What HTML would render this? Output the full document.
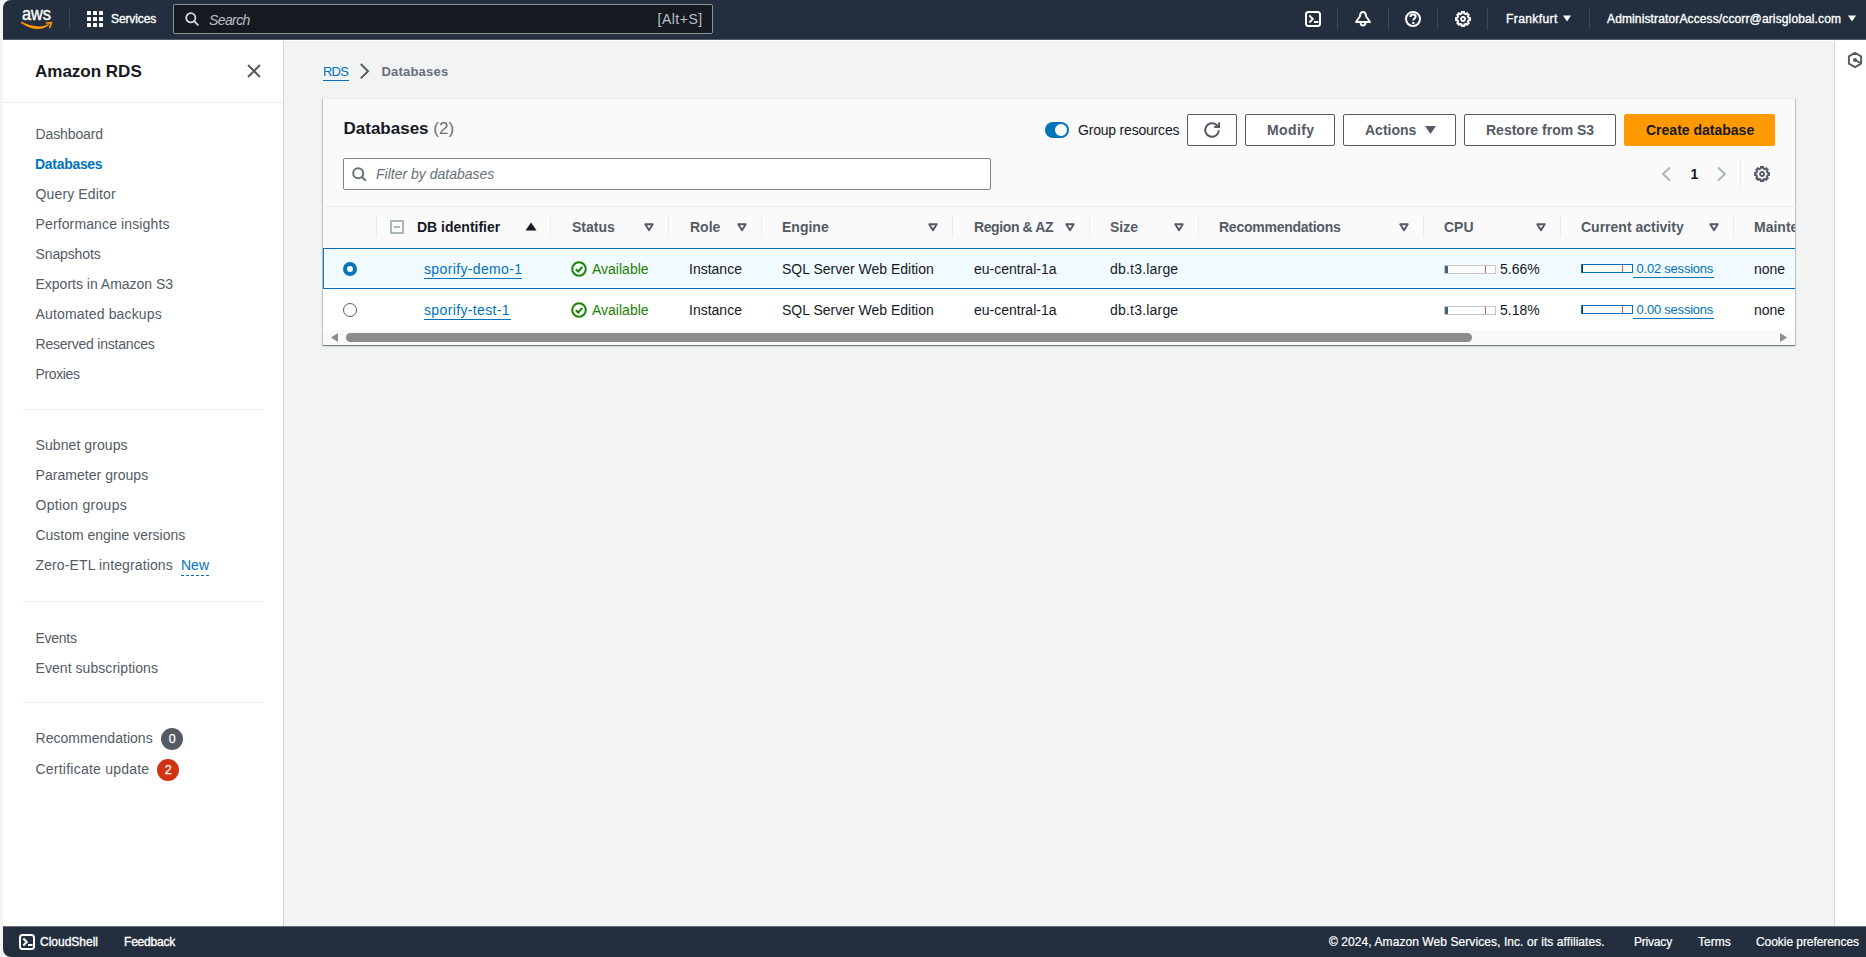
<!DOCTYPE html>
<html><head><meta charset="utf-8">
<style>
*{box-sizing:border-box;margin:0;padding:0}
html,body{width:1866px;height:957px;overflow:hidden;background:#f4f4f4;font-family:"Liberation Sans",sans-serif;}
.abs{position:absolute}
.t{position:absolute;white-space:nowrap}
#frame{position:absolute;left:3px;top:0;width:1863px;height:957px;border-radius:8px 0 0 8px;overflow:hidden;background:#fff}
#box{position:absolute;left:323px;top:98px;width:1472px;height:247px;background:#fafafa;box-shadow:0 1px 1px 0 rgba(0,28,36,.3),1px 1px 1px 0 rgba(0,28,36,.17),-1px 1px 1px 0 rgba(0,28,36,.17);border-top:1px solid #eaeded}
.btn{position:absolute;top:114px;height:32px;border:1px solid #545b64;border-radius:2px;background:#fff}
.badge{position:absolute;width:22px;height:22px;border-radius:11px}
</style></head><body>
<div id="frame"></div>

<div class="abs" style="left:3px;top:0;width:1863px;height:39px;background:#232f3e;border-top-left-radius:8px"></div>
<div class="abs" style="left:3px;top:39px;width:1863px;height:1px;background:#555d69"></div>
<div class="abs" style="left:3px;top:926px;width:1863px;height:31px;background:#232f3e;border-bottom-left-radius:8px"></div>
<div class="abs" style="left:3px;top:926px;width:1863px;height:1px;background:#6a717c"></div>
<div class="abs" style="left:283px;top:41px;width:1px;height:885px;background:#d0d5d8"></div>
<div class="abs" style="left:284px;top:41px;width:1550px;height:885px;background:#f2f3f3"></div>
<div class="abs" style="left:1834px;top:41px;width:1px;height:885px;background:#d5dbdb"></div>
<svg class="abs" style="left:20px;top:8px" width="34" height="23" viewBox="0 0 34 23">
  <text x="2" y="11.7" font-family="Liberation Sans" font-size="19" fill="#fff" stroke="#fff" stroke-width="0.4" textLength="29" lengthAdjust="spacingAndGlyphs">aws</text>
  <path d="M1.0 13.6 L1.0 14.9 Q18.3 26.1 29.0 17.0 L28.4 15.9 Q18.5 22.0 1.0 13.6 Z" fill="#ff9900"/>
  <path d="M26.5 15.0 L31.3 14.7 L29.8 19.5" stroke="#ff9900" stroke-width="1.7" fill="none" stroke-linecap="round" stroke-linejoin="miter"/>
</svg>
<div class="abs" style="left:69px;top:8px;width:1px;height:22px;background:#414750"></div>
<svg class="abs" style="left:87px;top:11px" width="16" height="16" viewBox="0 0 16 16" fill="#fff"><rect x="0" y="0" width="4" height="4" rx="0.6"/><rect x="6" y="0" width="4" height="4" rx="0.6"/><rect x="12" y="0" width="4" height="4" rx="0.6"/><rect x="0" y="6" width="4" height="4" rx="0.6"/><rect x="6" y="6" width="4" height="4" rx="0.6"/><rect x="12" y="6" width="4" height="4" rx="0.6"/><rect x="0" y="12" width="4" height="4" rx="0.6"/><rect x="6" y="12" width="4" height="4" rx="0.6"/><rect x="12" y="12" width="4" height="4" rx="0.6"/></svg>
<div class="t" style="left:111px;top:12.03px;font-size:12px;line-height:14px;color:#fff;font-weight:normal;letter-spacing:-0.1px;-webkit-text-stroke:0.35px #fff;">Services</div>
<div class="abs" style="left:173px;top:4px;width:540px;height:30px;background:#16191f;border:1px solid #879596;border-radius:2px"></div>
<svg class="abs" style="left:185px;top:12px" width="14" height="14" viewBox="0 0 14 14"><circle cx="5.8" cy="5.8" r="4.6" stroke="#d5dbdb" stroke-width="1.8" fill="none"/><path d="M9.2 9.2 L12.8 12.8" stroke="#d5dbdb" stroke-width="1.8" stroke-linecap="round"/></svg>
<div class="t" style="left:209px;top:11.67px;font-size:14px;line-height:16px;color:#b7c0c7;font-weight:normal;font-style:italic;letter-spacing:-0.6px;">Search</div>
<div class="t" style="left:657.5px;top:11.37px;font-size:14px;line-height:16px;color:#b7c0c7;font-weight:normal;letter-spacing:0.5px;">[Alt+S]</div>
<svg class="abs" style="left:1305px;top:11px" width="16" height="16" viewBox="0 0 16 16"><rect x="1" y="1" width="14" height="14" rx="2.5" stroke="#fff" stroke-width="2" fill="none"/><path d="M4.3 4.5 L7.8 8 L4.3 11.5" stroke="#fff" stroke-width="2" fill="none"/><rect x="9" y="10" width="4.5" height="2" fill="#fff"/></svg>
<div class="abs" style="left:1337px;top:8px;width:1px;height:22px;background:#414750"></div>
<svg class="abs" style="left:1355px;top:11px" width="16" height="17" viewBox="0 0 16 17"><path d="M8 1.1 C6.1 1.1 5.2 2.6 5.0 5.2 L1 11 L15 11 L11 5.2 C10.8 2.6 9.9 1.1 8 1.1 Z" stroke="#fff" stroke-width="2" fill="none" stroke-linejoin="round"/><path d="M5.6 12 A2.4 2.4 0 0 0 10.4 12" stroke="#fff" stroke-width="2" fill="none"/></svg>
<div class="abs" style="left:1388px;top:8px;width:1px;height:22px;background:#414750"></div>
<svg class="abs" style="left:1405px;top:11px" width="16" height="16" viewBox="0 0 16 16"><circle cx="8" cy="8" r="7" stroke="#fff" stroke-width="2" fill="none"/><path d="M5.4 6 C5.4 4.3 6.5 3.5 8 3.5 C9.5 3.5 10.6 4.4 10.6 5.7 C10.6 7.3 8.4 7.5 8.3 9 L8.3 9.6" stroke="#fff" stroke-width="2" fill="none"/><rect x="7.2" y="11" width="2.2" height="2" fill="#fff"/></svg>
<div class="abs" style="left:1437px;top:8px;width:1px;height:22px;background:#414750"></div>
<svg class="abs" style="left:1455px;top:11px" width="16" height="16" viewBox="0 0 16 16"><path d="M6.62 2.47 L6.90 1.09 L9.10 1.09 L9.38 2.47 L10.94 3.11 L12.11 2.34 L13.66 3.89 L12.89 5.06 L13.53 6.62 L14.91 6.90 L14.91 9.10 L13.53 9.38 L12.89 10.94 L13.66 12.11 L12.11 13.66 L10.94 12.89 L9.38 13.53 L9.10 14.91 L6.90 14.91 L6.62 13.53 L5.06 12.89 L3.89 13.66 L2.34 12.11 L3.11 10.94 L2.47 9.38 L1.09 9.10 L1.09 6.90 L2.47 6.62 L3.11 5.06 L2.34 3.89 L3.89 2.34 L5.06 3.11 Z" fill="none" stroke="#fff" stroke-width="2" stroke-linejoin="miter"/><circle cx="8" cy="8" r="2" stroke="#fff" stroke-width="1.8" fill="none"/></svg>
<div class="abs" style="left:1487px;top:8px;width:1px;height:22px;background:#414750"></div>
<div class="t" style="left:1506px;top:12.03px;font-size:12px;line-height:14px;color:#fff;font-weight:normal;letter-spacing:0.4px;-webkit-text-stroke:0.35px #fff;">Frankfurt</div>
<svg class="abs" style="left:1563px;top:15px" width="8" height="7" viewBox="0 0 8 7"><path d="M0 0.5 L8 0.5 L4 6.5 Z" fill="#fff"/></svg>
<div class="abs" style="left:1589px;top:8px;width:1px;height:22px;background:#414750"></div>
<div class="t" style="left:1607px;top:12.03px;font-size:12px;line-height:14px;color:#fff;font-weight:normal;letter-spacing:0.13px;-webkit-text-stroke:0.35px #fff;">AdministratorAccess/ccorr@arisglobal.com</div>
<svg class="abs" style="left:1848px;top:15px" width="8" height="7" viewBox="0 0 8 7"><path d="M0 0.5 L8 0.5 L4 6.5 Z" fill="#fff"/></svg>
<div class="t" style="left:35px;top:62.38px;font-size:17px;line-height:20px;color:#16191f;font-weight:bold;">Amazon RDS</div>
<svg class="abs" style="left:247px;top:64px" width="14" height="14" viewBox="0 0 14 14"><path d="M1 1 L13 13 M13 1 L1 13" stroke="#545b64" stroke-width="2"/></svg>
<div class="abs" style="left:3px;top:102px;width:280px;height:1px;background:#eaeded"></div>
<div class="t" style="left:35.5px;top:126.37px;font-size:14px;line-height:16px;color:#545b64;font-weight:normal;letter-spacing:-0.107px;">Dashboard</div>
<div class="t" style="left:35px;top:156.37px;font-size:14px;line-height:16px;color:#0073bb;font-weight:bold;letter-spacing:-0.3px;">Databases</div>
<div class="t" style="left:35.5px;top:186.37px;font-size:14px;line-height:16px;color:#545b64;font-weight:normal;letter-spacing:0.14px;">Query Editor</div>
<div class="t" style="left:35.5px;top:216.37px;font-size:14px;line-height:16px;color:#545b64;font-weight:normal;letter-spacing:0.129px;">Performance insights</div>
<div class="t" style="left:35.5px;top:246.37px;font-size:14px;line-height:16px;color:#545b64;font-weight:normal;letter-spacing:-0.118px;">Snapshots</div>
<div class="t" style="left:35.5px;top:276.37px;font-size:14px;line-height:16px;color:#545b64;font-weight:normal;letter-spacing:-0.006px;">Exports in Amazon S3</div>
<div class="t" style="left:35.5px;top:306.37px;font-size:14px;line-height:16px;color:#545b64;font-weight:normal;letter-spacing:0.156px;">Automated backups</div>
<div class="t" style="left:35.5px;top:336.37px;font-size:14px;line-height:16px;color:#545b64;font-weight:normal;letter-spacing:-0.218px;">Reserved instances</div>
<div class="t" style="left:35.5px;top:366.37px;font-size:14px;line-height:16px;color:#545b64;font-weight:normal;letter-spacing:-0.362px;">Proxies</div>
<div class="t" style="left:35.5px;top:437.37px;font-size:14px;line-height:16px;color:#545b64;font-weight:normal;letter-spacing:0.081px;">Subnet groups</div>
<div class="t" style="left:35.5px;top:467.37px;font-size:14px;line-height:16px;color:#545b64;font-weight:normal;letter-spacing:0.04px;">Parameter groups</div>
<div class="t" style="left:35.5px;top:497.37px;font-size:14px;line-height:16px;color:#545b64;font-weight:normal;letter-spacing:0.274px;">Option groups</div>
<div class="t" style="left:35.5px;top:527.37px;font-size:14px;line-height:16px;color:#545b64;font-weight:normal;letter-spacing:-0.025px;">Custom engine versions</div>
<div class="t" style="left:35.5px;top:557.37px;font-size:14px;line-height:16px;color:#545b64;font-weight:normal;letter-spacing:0.119px;">Zero-ETL integrations</div>
<div class="t" style="left:35.5px;top:630.37px;font-size:14px;line-height:16px;color:#545b64;font-weight:normal;letter-spacing:-0.279px;">Events</div>
<div class="t" style="left:35.5px;top:660.37px;font-size:14px;line-height:16px;color:#545b64;font-weight:normal;letter-spacing:0.058px;">Event subscriptions</div>
<div class="t" style="left:35.5px;top:730.37px;font-size:14px;line-height:16px;color:#545b64;font-weight:normal;letter-spacing:0.031px;">Recommendations</div>
<div class="t" style="left:35.5px;top:761.37px;font-size:14px;line-height:16px;color:#545b64;font-weight:normal;letter-spacing:0.23px;">Certificate update</div>
<div class="abs" style="left:23px;top:409px;width:240px;height:1px;background:#eaeded"></div>
<div class="abs" style="left:23px;top:601px;width:240px;height:1px;background:#eaeded"></div>
<div class="abs" style="left:23px;top:702px;width:240px;height:1px;background:#eaeded"></div>
<div class="t" style="left:181px;top:557.37px;font-size:14px;line-height:16px;color:#0073bb;font-weight:normal;">New</div>
<div class="abs" style="left:181px;top:575px;width:28px;height:0;border-top:1px dashed #0073bb"></div>
<div class="badge" style="left:161px;top:728px;background:#545b64"></div>
<div class="t" style="left:168.8px;top:732.37px;font-size:12.5px;line-height:14px;color:#fff;font-weight:normal;-webkit-text-stroke:0.25px #fff;">0</div>
<div class="badge" style="left:157px;top:759px;background:#d13212"></div>
<div class="t" style="left:164.8px;top:763.37px;font-size:12.5px;line-height:14px;color:#fff;font-weight:normal;-webkit-text-stroke:0.25px #fff;">2</div>
<svg class="abs" style="left:1846px;top:51px" width="18" height="18" viewBox="0 0 18 18"><path d="M9 1.9 L15.1 5.4 L15.1 12.6 L9 16.1 L2.9 12.6 L2.9 5.4 Z" stroke="#545b64" stroke-width="1.9" fill="none" stroke-linejoin="round"/><circle cx="9" cy="8.9" r="2" fill="#545b64"/><path d="M9 8.9 L14.8 12.2" stroke="#545b64" stroke-width="1.8"/></svg>
<svg class="abs" style="left:19px;top:934px" width="16" height="16" viewBox="0 0 16 16"><rect x="1" y="1" width="14" height="14" rx="2.5" stroke="#fff" stroke-width="2" fill="none"/><path d="M4.3 4.5 L7.8 8 L4.3 11.5" stroke="#fff" stroke-width="2" fill="none"/><rect x="9" y="10" width="4.5" height="2" fill="#fff"/></svg>
<div class="t" style="left:40px;top:935.03px;font-size:12px;line-height:14px;color:#fff;font-weight:normal;letter-spacing:0px;-webkit-text-stroke:0.35px #fff;">CloudShell</div>
<div class="t" style="left:124px;top:935.03px;font-size:12px;line-height:14px;color:#fff;font-weight:normal;letter-spacing:-0.2px;-webkit-text-stroke:0.35px #fff;">Feedback</div>
<div class="t" style="left:1329px;top:935.03px;font-size:12px;line-height:14px;color:#fff;font-weight:normal;letter-spacing:0.075px;-webkit-text-stroke:0.2px #fff;">© 2024, Amazon Web Services, Inc. or its affiliates.</div>
<div class="t" style="left:1634px;top:935.03px;font-size:12px;line-height:14px;color:#fff;font-weight:normal;letter-spacing:-0.2px;-webkit-text-stroke:0.2px #fff;">Privacy</div>
<div class="t" style="left:1698px;top:935.03px;font-size:12px;line-height:14px;color:#fff;font-weight:normal;-webkit-text-stroke:0.2px #fff;">Terms</div>
<div class="t" style="left:1756px;top:935.03px;font-size:12px;line-height:14px;color:#fff;font-weight:normal;letter-spacing:-0.06px;-webkit-text-stroke:0.2px #fff;">Cookie preferences</div>
<div class="t" style="left:323px;top:63.80px;font-size:13px;line-height:15px;color:#0073bb;font-weight:normal;letter-spacing:-0.8px;">RDS</div>
<div class="abs" style="left:323px;top:80px;width:26px;height:1px;background:#0073bb"></div>
<svg class="abs" style="left:358px;top:63px" width="12" height="17" viewBox="0 0 12 17"><path d="M2.8 1 L10 8.2 L2.8 15.4" stroke="#545b64" stroke-width="2" fill="none"/></svg>
<div class="t" style="left:381.5px;top:63.80px;font-size:13px;line-height:15px;color:#687078;font-weight:bold;letter-spacing:0.2px;">Databases</div>
<div id="box"></div>
<div class="t" style="left:343.5px;top:119.38px;font-size:17px;line-height:20px;color:#16191f;font-weight:bold;">Databases <span style="font-weight:normal;color:#687078">(2)</span></div>
<div class="abs" style="left:1045px;top:122px;width:24px;height:16px;border-radius:8px;background:#0073bb"></div>
<div class="abs" style="left:1055px;top:124px;width:12px;height:12px;border-radius:6px;background:#fff"></div>
<div class="t" style="left:1078px;top:122.37px;font-size:14px;line-height:16px;color:#16191f;font-weight:normal;letter-spacing:-0.2px;">Group resources</div>
<div class="btn" style="left:1187px;width:50px;"></div>
<svg class="abs" style="left:1203px;top:121px" width="18" height="18" viewBox="0 0 18 18"><path d="M15.8 9.3 A6.8 6.8 0 1 1 13.6 4.0 L15.6 5.8" stroke="#545b64" stroke-width="2" fill="none"/><path d="M16.1 1.2 L16.1 6.1 L11.2 6.1" stroke="#545b64" stroke-width="2" fill="none" stroke-linejoin="miter"/></svg>
<div class="btn" style="left:1245px;width:90px;"></div>
<div class="t" style="left:1267px;top:122.37px;font-size:14px;line-height:16px;color:#545b64;font-weight:bold;letter-spacing:0.4px;">Modify</div>
<div class="btn" style="left:1343px;width:113px;"></div>
<div class="t" style="left:1365px;top:122.37px;font-size:14px;line-height:16px;color:#545b64;font-weight:bold;letter-spacing:0px;">Actions</div>
<svg class="abs" style="left:1425px;top:125px" width="11" height="10" viewBox="0 0 11 10"><path d="M0 1 L11 1 L5.5 9 Z" fill="#545b64"/></svg>
<div class="btn" style="left:1464px;width:152px;"></div>
<div class="t" style="left:1486px;top:122.37px;font-size:14px;line-height:16px;color:#545b64;font-weight:bold;letter-spacing:0px;">Restore from S3</div>
<div class="btn" style="left:1624px;width:151px;background:#ff9900;border-color:#ff9900;"></div>
<div class="t" style="left:1646px;top:122.37px;font-size:14px;line-height:16px;color:#16191f;font-weight:bold;letter-spacing:0px;">Create database</div>
<div class="abs" style="left:343px;top:158px;width:648px;height:32px;background:#fff;border:1px solid #7d8790;border-radius:2px"></div>
<svg class="abs" style="left:352px;top:167px" width="15" height="15" viewBox="0 0 15 15"><circle cx="6.2" cy="6.2" r="5" stroke="#687078" stroke-width="2" fill="none"/><path d="M9.8 9.8 L13.8 13.8" stroke="#687078" stroke-width="2"/></svg>
<div class="t" style="left:376px;top:165.87px;font-size:14px;line-height:16px;color:#687078;font-weight:normal;font-style:italic;">Filter by databases</div>
<svg class="abs" style="left:1660px;top:166px" width="12" height="16" viewBox="0 0 12 16"><path d="M10 1.5 L3 8 L10 14.5" stroke="#aab7b8" stroke-width="2" fill="none"/></svg>
<div class="t" style="left:1690.5px;top:166.37px;font-size:14px;line-height:16px;color:#16191f;font-weight:bold;">1</div>
<svg class="abs" style="left:1716px;top:166px" width="12" height="16" viewBox="0 0 12 16"><path d="M2 1.5 L9 8 L2 14.5" stroke="#aab7b8" stroke-width="2" fill="none"/></svg>
<div class="abs" style="left:1740px;top:158px;width:1px;height:32px;background:#eaeded"></div>
<svg class="abs" style="left:1754px;top:166px" width="16" height="16" viewBox="0 0 16 16"><path d="M6.62 2.47 L6.90 1.09 L9.10 1.09 L9.38 2.47 L10.94 3.11 L12.11 2.34 L13.66 3.89 L12.89 5.06 L13.53 6.62 L14.91 6.90 L14.91 9.10 L13.53 9.38 L12.89 10.94 L13.66 12.11 L12.11 13.66 L10.94 12.89 L9.38 13.53 L9.10 14.91 L6.90 14.91 L6.62 13.53 L5.06 12.89 L3.89 13.66 L2.34 12.11 L3.11 10.94 L2.47 9.38 L1.09 9.10 L1.09 6.90 L2.47 6.62 L3.11 5.06 L2.34 3.89 L3.89 2.34 L5.06 3.11 Z" fill="none" stroke="#545b64" stroke-width="2" stroke-linejoin="miter"/><circle cx="8" cy="8" r="2" stroke="#545b64" stroke-width="1.8" fill="none"/></svg>
<div class="abs" style="left:322px;top:206px;width:1474px;height:1px;background:#eaeded"></div>
<div class="abs" style="left:0;top:0;width:1795px;height:957px;overflow:hidden">
<div class="abs" style="left:323px;top:248px;width:1473px;height:82px;background:#fff"></div>
<div class="abs" style="left:376px;top:216px;width:1px;height:22px;background:#eaeded"></div>
<div class="abs" style="left:550px;top:216px;width:1px;height:22px;background:#eaeded"></div>
<div class="abs" style="left:668px;top:216px;width:1px;height:22px;background:#eaeded"></div>
<div class="abs" style="left:761px;top:216px;width:1px;height:22px;background:#eaeded"></div>
<div class="abs" style="left:952px;top:216px;width:1px;height:22px;background:#eaeded"></div>
<div class="abs" style="left:1089px;top:216px;width:1px;height:22px;background:#eaeded"></div>
<div class="abs" style="left:1198px;top:216px;width:1px;height:22px;background:#eaeded"></div>
<div class="abs" style="left:1423px;top:216px;width:1px;height:22px;background:#eaeded"></div>
<div class="abs" style="left:1560px;top:216px;width:1px;height:22px;background:#eaeded"></div>
<div class="abs" style="left:1733px;top:216px;width:1px;height:22px;background:#eaeded"></div>
<svg class="abs" style="left:644px;top:223px" width="10" height="9" viewBox="0 0 10 9"><path d="M1.3 1.2 L8.7 1.2 L5 7.2 Z" stroke="#545b64" stroke-width="1.9" fill="none" stroke-linejoin="round"/></svg>
<svg class="abs" style="left:737px;top:223px" width="10" height="9" viewBox="0 0 10 9"><path d="M1.3 1.2 L8.7 1.2 L5 7.2 Z" stroke="#545b64" stroke-width="1.9" fill="none" stroke-linejoin="round"/></svg>
<svg class="abs" style="left:928px;top:223px" width="10" height="9" viewBox="0 0 10 9"><path d="M1.3 1.2 L8.7 1.2 L5 7.2 Z" stroke="#545b64" stroke-width="1.9" fill="none" stroke-linejoin="round"/></svg>
<svg class="abs" style="left:1065px;top:223px" width="10" height="9" viewBox="0 0 10 9"><path d="M1.3 1.2 L8.7 1.2 L5 7.2 Z" stroke="#545b64" stroke-width="1.9" fill="none" stroke-linejoin="round"/></svg>
<svg class="abs" style="left:1174px;top:223px" width="10" height="9" viewBox="0 0 10 9"><path d="M1.3 1.2 L8.7 1.2 L5 7.2 Z" stroke="#545b64" stroke-width="1.9" fill="none" stroke-linejoin="round"/></svg>
<svg class="abs" style="left:1399px;top:223px" width="10" height="9" viewBox="0 0 10 9"><path d="M1.3 1.2 L8.7 1.2 L5 7.2 Z" stroke="#545b64" stroke-width="1.9" fill="none" stroke-linejoin="round"/></svg>
<svg class="abs" style="left:1536px;top:223px" width="10" height="9" viewBox="0 0 10 9"><path d="M1.3 1.2 L8.7 1.2 L5 7.2 Z" stroke="#545b64" stroke-width="1.9" fill="none" stroke-linejoin="round"/></svg>
<svg class="abs" style="left:1709px;top:223px" width="10" height="9" viewBox="0 0 10 9"><path d="M1.3 1.2 L8.7 1.2 L5 7.2 Z" stroke="#545b64" stroke-width="1.9" fill="none" stroke-linejoin="round"/></svg>
<div class="abs" style="left:390px;top:220px;width:14px;height:14px;border:2px solid #aab7b8;border-radius:0"></div><div class="abs" style="left:394px;top:226px;width:6px;height:2px;background:#aab7b8"></div>
<div class="t" style="left:417px;top:218.87px;font-size:14px;line-height:16px;color:#16191f;font-weight:bold;">DB identifier</div>
<svg class="abs" style="left:525px;top:222px" width="12" height="9" viewBox="0 0 12 9"><path d="M0.5 8.5 L11.5 8.5 L6 0.5 Z" fill="#16191f"/></svg>
<div class="t" style="left:572px;top:219.37px;font-size:14px;line-height:16px;color:#545b64;font-weight:bold;letter-spacing:0px;">Status</div>
<div class="t" style="left:690px;top:219.37px;font-size:14px;line-height:16px;color:#545b64;font-weight:bold;letter-spacing:0px;">Role</div>
<div class="t" style="left:782px;top:219.37px;font-size:14px;line-height:16px;color:#545b64;font-weight:bold;letter-spacing:0px;">Engine</div>
<div class="t" style="left:974px;top:219.37px;font-size:14px;line-height:16px;color:#545b64;font-weight:bold;letter-spacing:-0.4px;">Region &amp; AZ</div>
<div class="t" style="left:1110px;top:219.37px;font-size:14px;line-height:16px;color:#545b64;font-weight:bold;letter-spacing:0px;">Size</div>
<div class="t" style="left:1219px;top:219.37px;font-size:14px;line-height:16px;color:#545b64;font-weight:bold;letter-spacing:-0.25px;">Recommendations</div>
<div class="t" style="left:1444px;top:219.37px;font-size:14px;line-height:16px;color:#545b64;font-weight:bold;letter-spacing:0px;">CPU</div>
<div class="t" style="left:1581px;top:219.37px;font-size:14px;line-height:16px;color:#545b64;font-weight:bold;letter-spacing:0px;">Current activity</div>
<div class="t" style="left:1754px;top:219.37px;font-size:14px;line-height:16px;color:#545b64;font-weight:bold;letter-spacing:0px;">Maintenance window</div>
<div class="abs" style="left:323px;top:248px;width:1473px;height:41px;background:#f1faff;border:1px solid #0073bb;border-right:none;box-shadow:inset 1px 1px 0 0 #fff,inset 0 -1px 0 0 #fff"></div>
<div class="abs" style="left:343px;top:262px;width:14px;height:14px;border-radius:7px;background:#0073bb"></div><div class="abs" style="left:347px;top:266px;width:6px;height:6px;border-radius:3px;background:#fff"></div>
<div class="t" style="left:424px;top:261.37px;font-size:14px;line-height:16px;color:#0073bb;font-weight:normal;letter-spacing:0.36px;">sporify-demo-1</div>
<div class="abs" style="left:424px;top:278px;width:98px;height:1px;background:#0073bb"></div>
<svg class="abs" style="left:571px;top:261px" width="16" height="16" viewBox="0 0 16 16"><circle cx="8" cy="8" r="6.8" stroke="#1d8102" stroke-width="2" fill="none"/><path d="M4.8 8.2 L7.2 10.5 L11.3 5.8" stroke="#1d8102" stroke-width="2" fill="none"/></svg>
<div class="t" style="left:592px;top:261.37px;font-size:14px;line-height:16px;color:#1d8102;font-weight:normal;">Available</div>
<div class="t" style="left:689px;top:261.37px;font-size:14px;line-height:16px;color:#16191f;font-weight:normal;">Instance</div>
<div class="t" style="left:782px;top:261.37px;font-size:14px;line-height:16px;color:#16191f;font-weight:normal;">SQL Server Web Edition</div>
<div class="t" style="left:974px;top:261.37px;font-size:14px;line-height:16px;color:#16191f;font-weight:normal;">eu-central-1a</div>
<div class="t" style="left:1110px;top:261.37px;font-size:14px;line-height:16px;color:#16191f;font-weight:normal;letter-spacing:0.2px;">db.t3.large</div>
<div class="abs" style="left:1444px;top:265px;width:52px;height:9px;border:1px solid #c6c6c6;background:#fff"></div><div class="abs" style="left:1445px;top:266px;width:3px;height:7px;background:#44617f"></div><div class="abs" style="left:1485px;top:266px;width:1px;height:7px;background:#e8504a"></div>
<div class="t" style="left:1500px;top:261.37px;font-size:14px;line-height:16px;color:#16191f;font-weight:normal;">5.66%</div>
<div class="abs" style="left:1581px;top:264px;width:52px;height:9px;border:1px solid #0073bb;background:#fff"></div><div class="abs" style="left:1582px;top:265px;width:1px;height:7px;background:#232f3e"></div><div class="abs" style="left:1622px;top:265px;width:1px;height:7px;background:#e8504a"></div>
<div class="t" style="left:1636.5px;top:261.00px;font-size:13px;line-height:15px;color:#0073bb;font-weight:normal;letter-spacing:-0.22px;">0.02 sessions</div>
<div class="abs" style="left:1633px;top:277px;width:81px;height:1px;background:#0073bb"></div>
<div class="t" style="left:1754px;top:261.37px;font-size:14px;line-height:16px;color:#16191f;font-weight:normal;">none</div>
<div class="abs" style="left:343px;top:303px;width:14px;height:14px;border-radius:7px;border:1.5px solid #545b64;background:#fff"></div>
<div class="t" style="left:424px;top:302.37px;font-size:14px;line-height:16px;color:#0073bb;font-weight:normal;letter-spacing:0.36px;">sporify-test-1</div>
<div class="abs" style="left:424px;top:319px;width:87px;height:1px;background:#0073bb"></div>
<svg class="abs" style="left:571px;top:302px" width="16" height="16" viewBox="0 0 16 16"><circle cx="8" cy="8" r="6.8" stroke="#1d8102" stroke-width="2" fill="none"/><path d="M4.8 8.2 L7.2 10.5 L11.3 5.8" stroke="#1d8102" stroke-width="2" fill="none"/></svg>
<div class="t" style="left:592px;top:302.37px;font-size:14px;line-height:16px;color:#1d8102;font-weight:normal;">Available</div>
<div class="t" style="left:689px;top:302.37px;font-size:14px;line-height:16px;color:#16191f;font-weight:normal;">Instance</div>
<div class="t" style="left:782px;top:302.37px;font-size:14px;line-height:16px;color:#16191f;font-weight:normal;">SQL Server Web Edition</div>
<div class="t" style="left:974px;top:302.37px;font-size:14px;line-height:16px;color:#16191f;font-weight:normal;">eu-central-1a</div>
<div class="t" style="left:1110px;top:302.37px;font-size:14px;line-height:16px;color:#16191f;font-weight:normal;letter-spacing:0.2px;">db.t3.large</div>
<div class="abs" style="left:1444px;top:306px;width:52px;height:9px;border:1px solid #c6c6c6;background:#fff"></div><div class="abs" style="left:1445px;top:307px;width:3px;height:7px;background:#44617f"></div><div class="abs" style="left:1485px;top:307px;width:1px;height:7px;background:#e8504a"></div>
<div class="t" style="left:1500px;top:302.37px;font-size:14px;line-height:16px;color:#16191f;font-weight:normal;">5.18%</div>
<div class="abs" style="left:1581px;top:305px;width:52px;height:9px;border:1px solid #0073bb;background:#fff"></div><div class="abs" style="left:1582px;top:306px;width:1px;height:7px;background:#232f3e"></div><div class="abs" style="left:1622px;top:306px;width:1px;height:7px;background:#e8504a"></div>
<div class="t" style="left:1636.5px;top:302.00px;font-size:13px;line-height:15px;color:#0073bb;font-weight:normal;letter-spacing:-0.22px;">0.00 sessions</div>
<div class="abs" style="left:1633px;top:318px;width:81px;height:1px;background:#0073bb"></div>
<div class="t" style="left:1754px;top:302.37px;font-size:14px;line-height:16px;color:#16191f;font-weight:normal;">none</div>
<div class="abs" style="left:324px;top:330px;width:1470px;height:14px;background:#fafafa"></div>
<svg class="abs" style="left:331px;top:333px" width="7" height="9" viewBox="0 0 7 9"><path d="M7 0 L0 4.5 L7 9 Z" fill="#8c8c8c"/></svg>
<div class="abs" style="left:346px;top:333px;width:1126px;height:9px;border-radius:4.5px;background:#8c8c8c"></div>
<svg class="abs" style="left:1780px;top:333px" width="7" height="9" viewBox="0 0 7 9"><path d="M0 0 L7 4.5 L0 9 Z" fill="#8c8c8c"/></svg>
</div>
</body></html>
